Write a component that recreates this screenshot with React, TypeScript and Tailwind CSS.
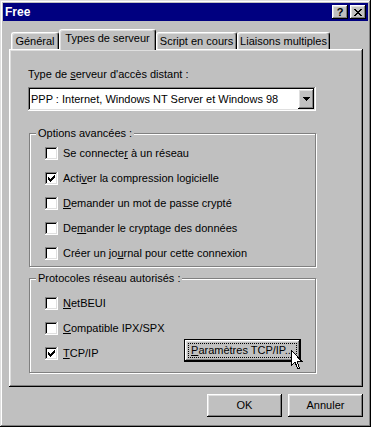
import React from 'react';

const font = "font-['Liberation_Sans',Arial,sans-serif] text-[11px] leading-[13px] text-black";
const raised = 'shadow-[inset_-1px_-1px_#000,inset_1px_1px_#fff,inset_-2px_-2px_#808080,inset_2px_2px_#dfdfdf]';
const sunken = 'shadow-[inset_-1px_-1px_#fff,inset_1px_1px_#808080,inset_-2px_-2px_#dfdfdf,inset_2px_2px_#000]';

function Check({ checked }: { checked?: boolean }) {
  return (
    <span className={`relative block w-[13px] h-[13px] shrink-0 bg-white ${sunken}`}>
      {checked && (
        <svg className="absolute left-[3px] top-[3px]" width="7" height="7" viewBox="0 0 7 7" shapeRendering="crispEdges">
          <rect x="6" y="0" width="1" height="1" />
          <rect x="5" y="1" width="2" height="1" />
          <rect x="0" y="2" width="1" height="1" />
          <rect x="4" y="2" width="3" height="1" />
          <rect x="0" y="3" width="2" height="1" />
          <rect x="3" y="3" width="3" height="1" />
          <rect x="0" y="4" width="5" height="1" />
          <rect x="1" y="5" width="3" height="1" />
          <rect x="2" y="6" width="1" height="1" />
        </svg>
      )}
    </span>
  );
}

function Row({ checked, children }: { checked?: boolean; children: React.ReactNode }) {
  return (
    <div className="flex items-center gap-[5px] h-[13px]">
      <Check checked={checked} />
      <span className="whitespace-nowrap">{children}</span>
    </div>
  );
}

function Group({ title, className, children }: { title: string; className: string; children: React.ReactNode }) {
  return (
    <div className={`relative ml-[20px] w-[287px] border border-[#808080] shadow-[1px_1px_0_#fff,inset_1px_1px_0_#fff] ${className}`}>
      <span className="absolute left-[6px] -top-[7px] bg-[#c0c0c0] px-[2px] whitespace-nowrap">{title}</span>
      {children}
    </div>
  );
}

function Tab({ label, w, active }: { label: string; w: string; active?: boolean }) {
  return (
    <div
      className={`${w} flex justify-center rounded-t-[3px] border-l border-t border-white border-r border-r-black shadow-[inset_-1px_0_#808080,inset_1px_1px_#dfdfdf] bg-[#c0c0c0] ${
        active ? 'relative z-10 h-[21px] -mb-px pt-[2px]' : 'h-[17px] pt-[2px]'
      }`}
    >
      <span className="whitespace-nowrap">{label}</span>
    </div>
  );
}

export default function App() {
  return (
    <div className={`w-[371px] h-[427px] bg-[#c0c0c0] p-[3px] ${font} shadow-[inset_-1px_-1px_#000,inset_1px_1px_#dfdfdf,inset_-2px_-2px_#808080,inset_2px_2px_#fff]`}>
      {/* title bar */}
      <div className="h-[18px] bg-[#000080] flex items-center justify-between pl-[2px] pr-[2px]">
        <span className="text-white font-bold text-[12px]">Free</span>
        <div className="flex gap-[2px]">
          <div className={`w-[16px] h-[14px] bg-[#c0c0c0] flex items-center justify-center font-bold text-[11px] ${raised}`}>?</div>
          <div className={`w-[16px] h-[14px] bg-[#c0c0c0] flex items-center justify-center ${raised}`}>
            <svg width="8" height="7" viewBox="0 0 8 7" shapeRendering="crispEdges">
              <path d="M0 0h2v1h1v1h2v-1h1v-1h2v1h-1v1h-1v1h-1v1h1v1h1v1h1v1h-2v-1h-1v-1h-2v1h-1v1h-2v-1h1v-1h1v-1h1v-1h-1v-1h-1v-1h-1z" />
            </svg>
          </div>
        </div>
      </div>

      {/* tabs */}
      <div className="mt-[8px] ml-[8px] h-[20px] flex items-end">
        <Tab label="Général" w="w-[48px]" />
        <Tab label="Types de serveur" w="w-[97px]" active />
        <Tab label="Script en cours" w="w-[81px]" />
        <Tab label="Liaisons multiples" w="w-[93px]" />
      </div>

      {/* panel */}
      <div className="ml-[6px] w-[354px] h-[338px] shadow-[inset_-1px_-1px_#000,inset_1px_1px_#fff,inset_-2px_-2px_#808080,inset_2px_2px_#dfdfdf] pt-[19px]">
        <div className="ml-[19px]">
          Type de <u>s</u>erveur d'accès distant :
        </div>
        <div className={`mt-[6px] ml-[19px] w-[288px] h-[24px] bg-white flex items-center justify-between p-[2px] ${sunken}`}>
          <span className="pl-[1px] whitespace-nowrap">PPP : Internet, Windows NT Server et Windows 98</span>
          <div className={`w-[16px] h-[20px] bg-[#c0c0c0] flex items-center justify-center ${raised}`}>
            <svg width="7" height="4" viewBox="0 0 7 4" shapeRendering="crispEdges">
              <path d="M0 0h7v1h-1v1h-1v1h-1v1h-1v-1h-1v-1h-1v-1h-1z" />
            </svg>
          </div>
        </div>

        <Group title="Options avancées :" className="mt-[22px] h-[134px] pt-[13px] pl-[15px] flex flex-col gap-[12px]">
          <Row>Se connecte<u>r</u> à un réseau</Row>
          <Row checked>Acti<u>v</u>er la compression logicielle</Row>
          <Row><u>D</u>emander un mot de passe crypté</Row>
          <Row>De<u>m</u>ander le cryptage des données</Row>
          <Row>Créer un jo<u>u</u>rnal pour cette connexion</Row>
        </Group>

        <Group title="Protocoles réseau autorisés :" className="mt-[11px] h-[95px] pt-[18px] pl-[15px] flex flex-col gap-[12px]">
          <Row><u>N</u>etBEUI</Row>
          <Row><u>C</u>ompatible IPX/SPX</Row>
          <div className="flex items-start">
            <div className="w-[139px]">
              <Row checked><u>T</u>CP/IP</Row>
            </div>
            <div className="relative -mt-[8px] w-[117px] h-[23px] border border-black bg-[#c0c0c0]">
              <div className={`w-full h-full flex items-center justify-center ${raised}`}>
                <span className="relative">
                  <u>P</u>aramètres TCP/IP...
                </span>
              </div>
              <span className="absolute inset-[3px] border border-dotted border-black" />
              <svg className="absolute left-[106px] top-[10px]" width="12" height="19" viewBox="0 0 12 19" shapeRendering="crispEdges">
                <path d="M0.5 0.5V15.5L4 12.2L6.5 18H8.5L6.2 11.5H11L0.5 0.5Z" fill="#fff" stroke="#000" strokeWidth="1" />
              </svg>
            </div>
          </div>
        </Group>
      </div>

      {/* bottom buttons */}
      <div className="mt-[7px] ml-[6px] w-[354px] flex justify-end gap-[6px]">
        <div className={`w-[75px] h-[23px] bg-[#c0c0c0] flex items-center justify-center ${raised}`}>OK</div>
        <div className={`w-[75px] h-[23px] bg-[#c0c0c0] flex items-center justify-center ${raised}`}>Annuler</div>
      </div>
    </div>
  );
}
